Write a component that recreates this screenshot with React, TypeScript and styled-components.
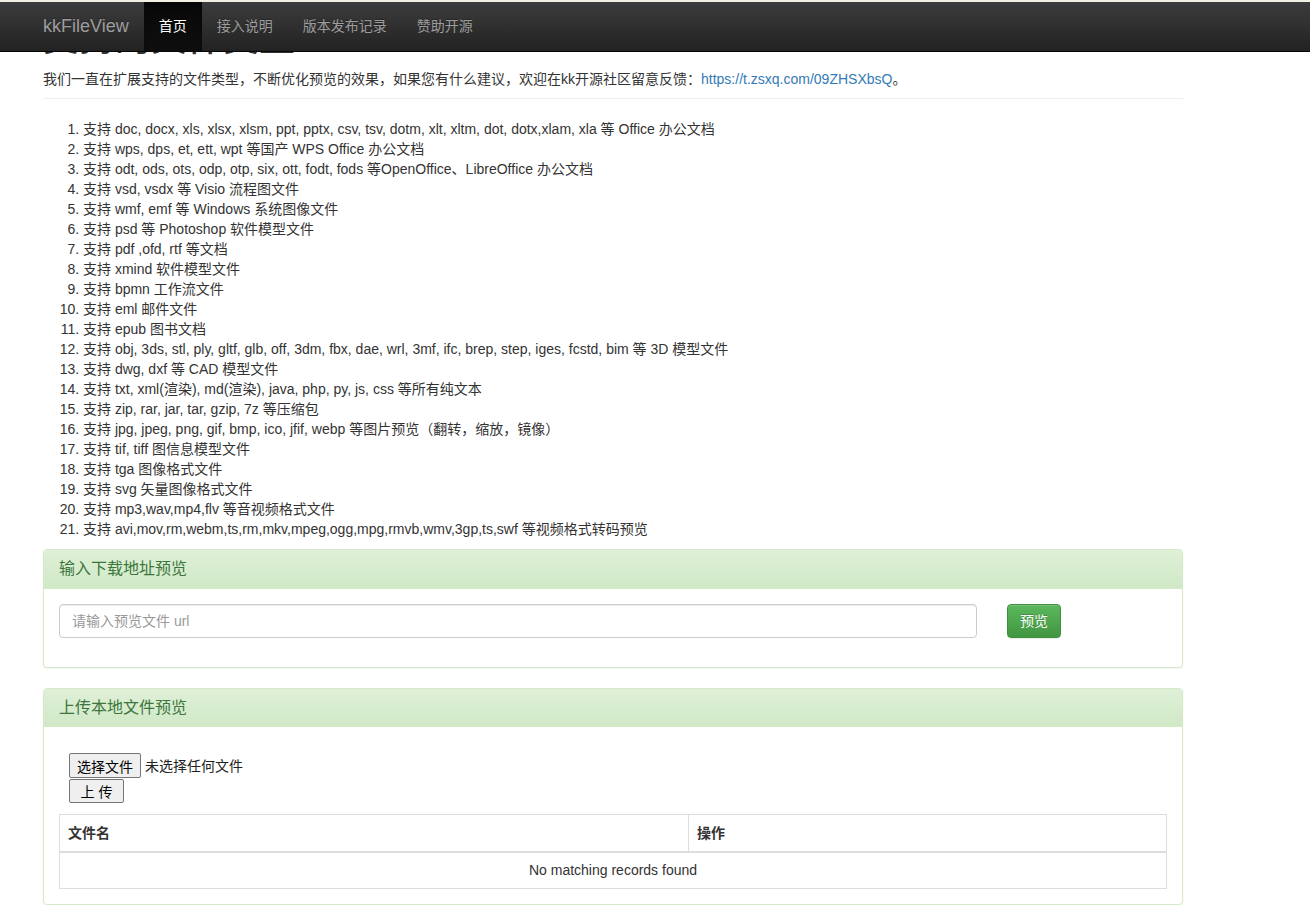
import styled, { createGlobalStyle } from "styled-components";

const GlobalStyle = createGlobalStyle`
  * {
    box-sizing: border-box;
  }
  html,
  body {
    margin: 0;
    padding: 0;
  }
  body {
    font-family: "Liberation Sans", Arial, "Noto Sans CJK SC", sans-serif;
    font-size: 14px;
    line-height: 1.42857143;
    color: #333;
    background: #fff;
  }
`;

const Navbar = styled.nav`
  position: fixed;
  top: 0;
  left: 0;
  right: 0;
  z-index: 1030;
  height: 52px;
  display: flex;
  padding-left: 28px;
  border-top: 2px solid #f3f1e4;
  border-bottom: 1px solid #080808;
  background-image: linear-gradient(to bottom, #3c3c3c 0, #222 100%);
`;

const Brand = styled.a`
  padding: 0 15px;
  line-height: 49px;
  font-size: 18px;
  color: #9d9d9d;
  text-decoration: none;
  text-shadow: 0 -1px 0 rgba(0, 0, 0, 0.25);
`;

const NavLink = styled.a<{ $active?: boolean }>`
  padding: 0 15px;
  line-height: 49px;
  color: ${(p) => (p.$active ? "#fff" : "#9d9d9d")};
  text-decoration: none;
  text-shadow: 0 -1px 0 rgba(0, 0, 0, 0.25);
  background-image: ${(p) =>
    p.$active ? "linear-gradient(to bottom, #080808 0, #0f0f0f 100%)" : "none"};
  box-shadow: ${(p) =>
    p.$active ? "inset 0 3px 9px rgba(0, 0, 0, 0.25)" : "none"};
`;

const Container = styled.main`
  width: 1140px;
  margin-left: 43px;
`;

const PageHeader = styled.div`
  margin: 0 0 20px;
  padding-bottom: 9px;
  border-bottom: 1px solid #eee;
`;

// page is scrolled a little: the heading sits mostly under the fixed navbar
const Title = styled.h1`
  margin: 19px 0 10px;
  font-size: 36px;
  font-weight: 500;
  line-height: 40px;
`;

const Link = styled.a`
  color: #337ab7;
  text-decoration: none;
`;

const TypeList = styled.ol`
  margin: 0 0 10px;
  padding-left: 40px;
`;

const Panel = styled.section<{ $last?: boolean }>`
  margin-bottom: ${(p) => (p.$last ? "0" : "20px")};
  border: 1px solid #d6e9c6;
  border-radius: 4px;
  background: #fff;
  box-shadow: 0 1px 2px rgba(0, 0, 0, 0.05);
`;

const PanelHeading = styled.div`
  padding: 10px 15px;
  border-bottom: 1px solid #d6e9c6;
  border-radius: 3px 3px 0 0;
  color: #3c763d;
  background-image: linear-gradient(to bottom, #dff0d8 0, #d0e9c6 100%);
`;

const PanelTitle = styled.h3`
  margin: 0;
  font-size: 16px;
  font-weight: 400;
  line-height: 1.1;
`;

const PanelBody = styled.div`
  padding: 15px;
`;

const UrlRow = styled.div`
  display: grid;
  grid-template-columns: 918px auto;
  justify-content: start;
  column-gap: 30px;
  margin-bottom: 14px;
`;

const UrlInput = styled.input`
  height: 34px;
  padding: 6px 12px;
  font: inherit;
  color: #555;
  border: 1px solid #ccc;
  border-radius: 4px;
  box-shadow: inset 0 1px 1px rgba(0, 0, 0, 0.075);
  &::placeholder {
    color: #999;
  }
`;

const SuccessButton = styled.button`
  height: 34px;
  padding: 6px 12px;
  font: inherit;
  color: #fff;
  border: 1px solid #3e8f3e;
  border-radius: 4px;
  text-shadow: 0 -1px 0 rgba(0, 0, 0, 0.2);
  background-image: linear-gradient(to bottom, #5cb85c 0, #419641 100%);
  box-shadow: inset 0 1px 0 rgba(255, 255, 255, 0.15), 0 1px 1px rgba(0, 0, 0, 0.075);
`;

const UploadForm = styled.form`
  display: flex;
  flex-direction: column;
  align-items: flex-start;
  gap: 1px;
  padding: 11px 10px 0;
`;

const FileRow = styled.div`
  display: flex;
  align-items: center;
  gap: 4px;
  color: #222;
`;

const NativeButton = styled.button<{ $wide?: boolean }>`
  height: ${(p) => (p.$wide ? "25px" : "24px")};
  width: ${(p) => (p.$wide ? "72px" : "55px")};
  padding: 0;
  font-family: "Liberation Sans", Arial, "Noto Sans CJK SC", sans-serif;
  font-size: 14px;
  color: #000;
  background: #efefef;
  border: 1px solid #767676;
  border-radius: 2px;
`;

const Table = styled.table`
  width: 100%;
  margin-top: 11px;
  border-collapse: collapse;
  border: 1px solid #ddd;
`;

const Th = styled.th<{ $width?: string }>`
  width: ${(p) => p.$width ?? "auto"};
  padding: 8px;
  text-align: left;
  font-weight: bold;
  line-height: 20px;
  border: 1px solid #ddd;
  border-bottom-width: 2px;
`;

const EmptyCell = styled.td`
  padding: 8px;
  text-align: center;
  line-height: 19px;
  border: 1px solid #ddd;
`;

const fileTypes = [
  "支持 doc, docx, xls, xlsx, xlsm, ppt, pptx, csv, tsv, dotm, xlt, xltm, dot, dotx,xlam, xla 等 Office 办公文档",
  "支持 wps, dps, et, ett, wpt 等国产 WPS Office 办公文档",
  "支持 odt, ods, ots, odp, otp, six, ott, fodt, fods 等OpenOffice、LibreOffice 办公文档",
  "支持 vsd, vsdx 等 Visio 流程图文件",
  "支持 wmf, emf 等 Windows 系统图像文件",
  "支持 psd 等 Photoshop 软件模型文件",
  "支持 pdf ,ofd, rtf 等文档",
  "支持 xmind 软件模型文件",
  "支持 bpmn 工作流文件",
  "支持 eml 邮件文件",
  "支持 epub 图书文档",
  "支持 obj, 3ds, stl, ply, gltf, glb, off, 3dm, fbx, dae, wrl, 3mf, ifc, brep, step, iges, fcstd, bim 等 3D 模型文件",
  "支持 dwg, dxf 等 CAD 模型文件",
  "支持 txt, xml(渲染), md(渲染), java, php, py, js, css 等所有纯文本",
  "支持 zip, rar, jar, tar, gzip, 7z 等压缩包",
  "支持 jpg, jpeg, png, gif, bmp, ico, jfif, webp 等图片预览（翻转，缩放，镜像）",
  "支持 tif, tiff 图信息模型文件",
  "支持 tga 图像格式文件",
  "支持 svg 矢量图像格式文件",
  "支持 mp3,wav,mp4,flv 等音视频格式文件",
  "支持 avi,mov,rm,webm,ts,rm,mkv,mpeg,ogg,mpg,rmvb,wmv,3gp,ts,swf 等视频格式转码预览",
];

export default function App() {
  return (
    <>
      <GlobalStyle />
      <Navbar>
        <Brand href="#">kkFileView</Brand>
        <NavLink href="#" $active>
          首页
        </NavLink>
        <NavLink href="#">接入说明</NavLink>
        <NavLink href="#">版本发布记录</NavLink>
        <NavLink href="#">赞助开源</NavLink>
      </Navbar>

      <Container>
        <PageHeader>
          <Title>支持的文件类型</Title>
          我们一直在扩展支持的文件类型，不断优化预览的效果，如果您有什么建议，欢迎在kk开源社区留意反馈：
          <Link href="#">https://t.zsxq.com/09ZHSXbsQ</Link>。
        </PageHeader>

        <TypeList>
          {fileTypes.map((t) => (
            <li key={t}>{t}</li>
          ))}
        </TypeList>

        {/* url preview */}
        <Panel>
          <PanelHeading>
            <PanelTitle>输入下载地址预览</PanelTitle>
          </PanelHeading>
          <PanelBody>
            <UrlRow>
              <UrlInput type="text" placeholder="请输入预览文件 url" />
              <SuccessButton type="button">预览</SuccessButton>
            </UrlRow>
          </PanelBody>
        </Panel>

        {/* local upload */}
        <Panel $last>
          <PanelHeading>
            <PanelTitle>上传本地文件预览</PanelTitle>
          </PanelHeading>
          <PanelBody>
            <UploadForm onSubmit={(e) => e.preventDefault()}>
              <FileRow>
                <NativeButton type="button" $wide>
                  选择文件
                </NativeButton>
                <span>未选择任何文件</span>
              </FileRow>
              <NativeButton type="submit">上 传</NativeButton>
            </UploadForm>
            <Table>
              <thead>
                <tr>
                  <Th $width="629px">文件名</Th>
                  <Th>操作</Th>
                </tr>
              </thead>
              <tbody>
                <tr>
                  <EmptyCell colSpan={2}>No matching records found</EmptyCell>
                </tr>
              </tbody>
            </Table>
          </PanelBody>
        </Panel>
      </Container>
    </>
  );
}
